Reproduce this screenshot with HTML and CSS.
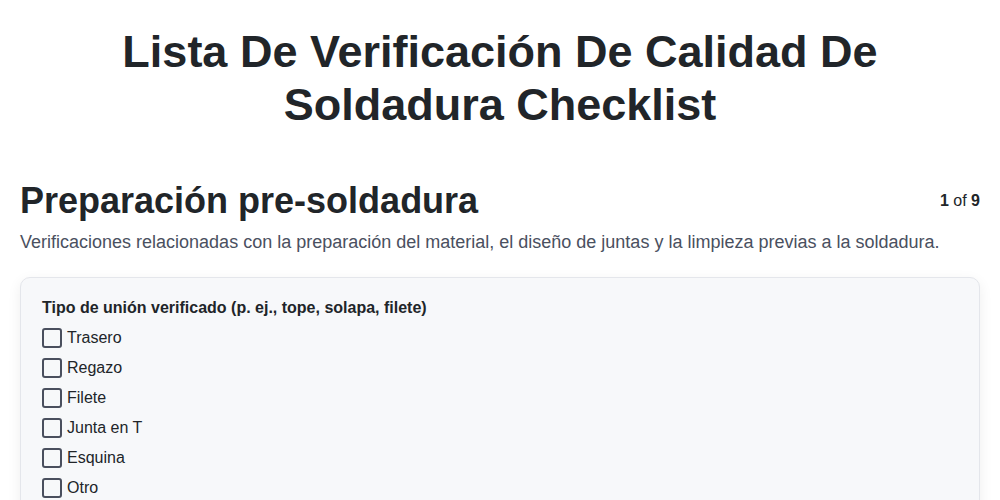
FILE: index.html
```html
<!DOCTYPE html>
<html lang="es">
<head>
<meta charset="utf-8">
<link rel="stylesheet" href="styles.css">
</head>
<body>
<div class="page">
  <h1 class="title">Lista De Verificación De Calidad De Soldadura Checklist</h1>
  <div class="section-head">
    <h2 class="section-title">Preparación pre-soldadura</h2>
    <div class="pager"><b>1</b> of <b>9</b></div>
  </div>
  <p class="section-desc">Verificaciones relacionadas con la preparación del material, el diseño de juntas y la limpieza previas a la soldadura.</p>
  <div class="card">
    <div class="q-label">Tipo de unión verificado (p. ej., tope, solapa, filete)</div>
    <label class="opt"><span class="box"></span><span>Trasero</span></label>
    <label class="opt"><span class="box"></span><span>Regazo</span></label>
    <label class="opt"><span class="box"></span><span>Filete</span></label>
    <label class="opt"><span class="box"></span><span>Junta en T</span></label>
    <label class="opt"><span class="box"></span><span>Esquina</span></label>
    <label class="opt"><span class="box"></span><span>Otro</span></label>
  </div>
</div>
</body>
</html>
```
FILE: styles.css
```css
html, body { margin: 0; padding: 0; background: #fff; }
body { font-family: "Liberation Sans", Arial, sans-serif; color: #212529; }
.page { padding: 0 20px; }
.title {
  margin: 0;
  padding: 25px 80px 0;
  font-size: 45px;
  line-height: 53px;
  font-weight: 700;
  text-align: center;
  color: #212529;
}
.section-head {
  display: flex;
  justify-content: space-between;
  align-items: center;
  margin-top: 48px;
}
.section-title { margin: 0; font-size: 36px; line-height: 44px; font-weight: 700; }
.pager { font-size: 16px; color: #212529; }
.section-desc { margin: 7px 0 0; font-size: 18px; line-height: 24px; color: #4a5060; }
.card {
  margin-top: 23px;
  background: #f7f8fa;
  border: 1px solid #e4e6eb;
  border-radius: 10px;
  box-shadow: 0 4px 14px rgba(0,0,0,0.07);
  padding: 20px 21px;
  height: 300px;
}
.q-label { font-size: 16px; font-weight: 700; line-height: 20px; margin-bottom: 5px; }
.opt { display: flex; align-items: center; gap: 5px; height: 30px; font-size: 16px; }
.box {
  width: 16px; height: 16px;
  border: 2px solid #4a4f5e;
  border-radius: 3px;
  flex: none;
}
```
